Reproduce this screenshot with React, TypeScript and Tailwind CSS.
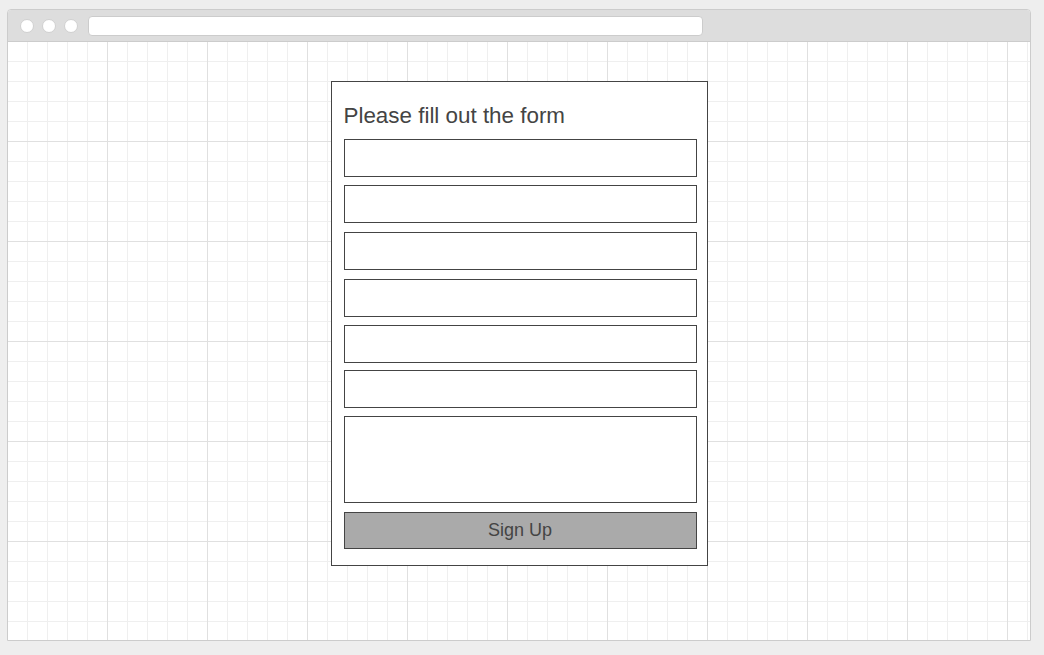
export default function App() {
  const inputs = ["mt-0", "mt-[8px]", "mt-[9px]", "mt-[9px]", "mt-[8px]", "mt-[7px]"];

  return (
    <div className="min-h-screen w-full bg-[#eeeeee] pl-[7px] pt-[9px] font-['Liberation_Sans',Arial,sans-serif]">
      <div className="flex h-[632px] w-[1024px] flex-col overflow-hidden rounded-t-[4px] border border-[#cccccc] bg-white">
        {/* title bar */}
        <div className="flex h-[32px] shrink-0 items-center border-b border-[#cccccc] bg-[#dddddd] pl-[12px]">
          <span className="h-[14px] w-[14px] rounded-full border border-[#d0d0d0] bg-white" />
          <span className="ml-[8px] h-[14px] w-[14px] rounded-full border border-[#d0d0d0] bg-white" />
          <span className="ml-[8px] h-[14px] w-[14px] rounded-full border border-[#d0d0d0] bg-white" />
          <div className="ml-[10px] h-[20px] w-[615px] rounded-[4px] border border-[#cccccc] bg-white" />
        </div>

        {/* canvas */}
        <div className="flex-1 bg-white bg-[linear-gradient(to_right,#e0e0e0_1px,transparent_1px),linear-gradient(to_bottom,#e0e0e0_1px,transparent_1px),linear-gradient(to_right,#efefef_1px,transparent_1px),linear-gradient(to_bottom,#efefef_1px,transparent_1px)] bg-size-[100px_100px,100px_100px,20px_20px,20px_20px] bg-position-[-1px_-1px]">
          <form
            className="mx-auto mt-[39px] flex w-[377px] flex-col border border-[#444444] bg-white pb-[16px] pl-[12px] pr-[10px] pt-[21px]"
            onSubmit={(e) => e.preventDefault()}
          >
            <h1 className="mb-[11px] text-[22.4px] leading-[25px] text-[#444444]">
              Please fill out the form
            </h1>
            {inputs.map((m, i) => (
              <input
                key={i}
                type="text"
                className={`${m} h-[38px] w-[353px] border border-[#444444] bg-white outline-none`}
              />
            ))}
            <textarea className="mt-[8px] h-[87px] w-[353px] resize-none border border-[#444444] bg-white outline-none" />
            <button
              type="submit"
              className="mt-[9px] h-[37px] w-[353px] border border-[#444444] bg-[#aaaaaa] pb-[1px] text-[18px] leading-none text-[#444444]"
            >
              Sign Up
            </button>
          </form>
        </div>
      </div>
    </div>
  );
}
